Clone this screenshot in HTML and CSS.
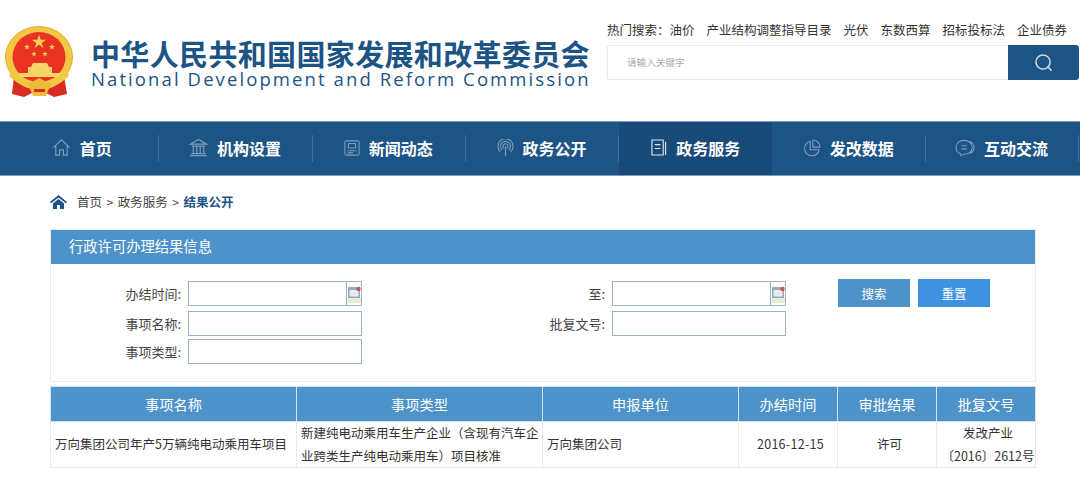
FILE: index.html
```html
<!DOCTYPE html>
<html lang="zh-CN">
<head>
<meta charset="utf-8">
<title>行政许可办理结果信息</title>
<link rel="stylesheet" href="styles.css">
</head>
<body>
<header class="top">
  <div class="brand">
    <svg class="emblem" viewBox="0 0 70 72" width="70" height="72" aria-hidden="true">
      <defs><polygon id="star" points="0,-1 .225,-.309 .951,-.309 .363,.118 .588,.809 0,.382 -.588,.809 -.363,.118 -.951,-.309 -.225,-.309" fill="#f4cf58"/></defs>
      <path d="M10 50 L8 68 L20 71 L30 66 L40 66 L50 71 L63 68 L60 50 Z" fill="#d92c20"/>
      <ellipse cx="35" cy="31" rx="33.5" ry="30.500" fill="#f3c644"/>
      <ellipse cx="35" cy="31" rx="33.5" ry="30.500" fill="none" stroke="#e7b034" stroke-width="1"/>
      <ellipse cx="35" cy="31" rx="26.500" ry="25" fill="#e93222"/>
      <use href="#star" transform="translate(35 16) scale(7.5)"/>
      <use href="#star" transform="translate(23 21) scale(3.2)"/>
      <use href="#star" transform="translate(48 21) scale(3.2)"/>
      <use href="#star" transform="translate(30 28) scale(3)"/>
      <use href="#star" transform="translate(41 28) scale(3)"/>
      <path d="M27 41 L29 37 L43 37 L45 41 Z M24 41 H48 V47 H24 Z M15 47 H56 V51 H15 Z" fill="#f6d468"/>
      <path d="M7 44 Q35 72 63 44 L65 50 Q35 78 5 50 Z" fill="#f3c644"/>
      <path d="M24 58 L35 52 L47 58 L42 70 L29 70 Z" fill="#efbb3a"/>
      <path d="M30 63 H41 V66 H30 Z" fill="#d92c20"/>
    </svg>
    <div class="brand-text">
      <div class="brand-cn">中华人民共和国国家发展和改革委员会</div>
      <div class="brand-en">National Development and Reform Commission</div>
    </div>
  </div>
  <div class="tools">
    <div class="hot">
      <span class="hot-label">热门搜索：</span>
      <a>油价</a><a>产业结构调整指导目录</a><a>光伏</a><a>东数西算</a><a>招标投标法</a><a>企业债券</a>
    </div>
    <div class="search">
      <div class="search-field">请输入关键字</div>
      <div class="search-btn">
        <svg viewBox="0 0 20 20" width="19" height="19" fill="none" stroke="#cfdbe6" stroke-width="1.6"><circle cx="9.5" cy="9.5" r="7.4"/><path d="M14.8 14.8 L18 18" stroke-linecap="round"/></svg>
      </div>
    </div>
  </div>
</header>

<nav class="nav">
  <a class="nav-item">
    <svg class="nav-icon" viewBox="0 0 20 20" width="19" height="19"><path d="M1.5 10 L10 2 L18.5 10 M4 8.5 V18 H8 V12.5 H12 V18 H16 V8.5"/></svg>
    <span>首页</span>
  </a>
  <a class="nav-item">
    <svg class="nav-icon" viewBox="0 0 20 20" width="19" height="19"><path d="M1.5 6.5 L10 1.5 L18.5 6.5 Z M3 8.5 H17 M4.5 8.5 V16 M8.2 8.5 V16 M11.8 8.5 V16 M15.5 8.5 V16 M2.5 16.5 H17.5 M1 18.5 H19"/></svg>
    <span>机构设置</span>
  </a>
  <a class="nav-item">
    <svg class="nav-icon" viewBox="0 0 18 18" width="16" height="16"><rect x="1" y="1" width="16" height="16" rx="1.5"/><rect x="5" y="4" width="8" height="5"/><path d="M4 12 H14 M4 14.5 H10"/></svg>
    <span>新闻动态</span>
  </a>
  <a class="nav-item">
    <svg class="nav-icon" viewBox="0 0 18 18" width="17" height="17"><path d="M3.5 13.5 A8 8 0 1 1 14.5 13.5 M5.6 11.6 A5.2 5.2 0 1 1 12.4 11.6 M7.6 9.8 A2.6 2.6 0 1 1 10.4 9.8 M9 8 V18"/></svg>
    <span>政务公开</span>
  </a>
  <a class="nav-item is-active">
    <svg class="nav-icon" viewBox="0 0 17 18" width="16" height="17"><path d="M1 1 H13 V17 H1 Z M15.5 3 V17 M4 6 H10 M4 10 H10"/></svg>
    <span>政务服务</span>
  </a>
  <a class="nav-item">
    <svg class="nav-icon" viewBox="0 0 20 20" width="18" height="18"><path d="M8 2.5 A8.2 8.2 0 1 0 18 12 H8 Z M11 1.2 A8 8 0 0 1 18.8 9 H11 Z"/></svg>
    <span>发改数据</span>
  </a>
  <a class="nav-item">
    <svg class="nav-icon" viewBox="0 0 22 20" width="20" height="18"><path d="M10 1.5 C4.5 1.5 1 5 1 9.5 C1 13 3 15.5 6 16.5 L6.5 18.5 L9.5 17 C15.5 17 19 14 19 9.5 C19 5 15.5 1.5 10 1.5 Z M16 2.5 C19 4 21 6.500 21 9.5 C21 12.500 19.500 14.800 17 16 M7 7.500 H13 M7 11 H13"/></svg>
    <span>互动交流</span>
  </a>
</nav>

<main class="main">
  <div class="crumb">
    <svg class="crumb-icon" viewBox="0 0 17 14" width="17" height="14"><path d="M8.500 0 L17 7 L15.800 8.300 L8.500 2.400 L1.200 8.300 L0 7 Z" fill="#1c5485"/><path d="M3 8.600 L8.500 4 L14 8.600 V14 H10 V10 H7 V14 H3 Z" fill="#1c5485"/></svg>
    <span>首页</span><span class="crumb-sep">&gt;</span><span>政务服务</span><span class="crumb-sep">&gt;</span><strong class="crumb-now">结果公开</strong>
  </div>

  <section class="panel">
    <h2 class="panel-head">行政许可办理结果信息</h2>
    <form class="filter">
      <label class="filter-label">办结时间:</label>
      <div class="field field-date">
        <input class="field-input" type="text">
        <span class="cal">
          <svg viewBox="0 0 14 23" width="14" height="23"><rect y="16" width="14" height="5" fill="#e7ecd6"/><rect x="1" y="5" width="12" height="11" fill="#97a7bc"/><rect x="2.500" y="8" width="9" height="6.500" fill="#e6ebf2"/><circle cx="11.500" cy="7" r="2.200" fill="#d0514c"/></svg>
        </span>
      </div>
      <label class="filter-label">至:</label>
      <div class="field field-date">
        <input class="field-input" type="text">
        <span class="cal">
          <svg viewBox="0 0 14 23" width="14" height="23"><rect y="16" width="14" height="5" fill="#e7ecd6"/><rect x="1" y="5" width="12" height="11" fill="#97a7bc"/><rect x="2.500" y="8" width="9" height="6.500" fill="#e6ebf2"/><circle cx="11.500" cy="7" r="2.200" fill="#d0514c"/></svg>
        </span>
      </div>
      <button class="btn btn-search" type="button">搜索</button>
      <button class="btn btn-reset" type="button">重置</button>

      <label class="filter-label row-start">事项名称:</label>
      <div class="field"><input class="field-input" type="text"></div>
      <label class="filter-label">批复文号:</label>
      <div class="field"><input class="field-input" type="text"></div>

      <label class="filter-label row-start">事项类型:</label>
      <div class="field"><input class="field-input" type="text"></div>
    </form>
  </section>

  <table class="results">
    <colgroup>
      <col class="c1"><col class="c2"><col class="c3"><col class="c4"><col class="c5"><col class="c6">
    </colgroup>
    <thead>
      <tr><th>事项名称</th><th>事项类型</th><th>申报单位</th><th>办结时间</th><th>审批结果</th><th>批复文号</th></tr>
    </thead>
    <tbody>
      <tr>
        <td>万向集团公司年产5万辆纯电动乘用车项目</td>
        <td>新建纯电动乘用车生产企业（含现有汽车企业跨类生产纯电动乘用车）项目核准</td>
        <td>万向集团公司</td>
        <td class="center date">2016-12-15</td>
        <td class="center">许可</td>
        <td class="center tight">发改产业<br>〔2016〕2612号</td>
      </tr>
    </tbody>
  </table>
</main>
</body>
</html>
```

FILE: styles.css
```css
* { box-sizing: border-box; }

html, body { margin: 0; padding: 0; }

body {
  background: #fff;
  color: #333;
  font-family: "Noto Sans CJK SC", "Noto Sans", sans-serif;
  font-size: 13px;
  overflow: hidden;
}

/* header */
.top {
  display: flex;
  justify-content: space-between;
  height: 121px;
}

.brand {
  display: flex;
  padding: 26px 0 0 4px;
}

.emblem { flex: none; }

.brand-text {
  margin: 10px 0 0 17px;
  color: #1c5485;
}

.brand-cn {
  font-size: 29px;
  line-height: 35px;
  font-weight: 700;
  letter-spacing: 0.35px;
  white-space: nowrap;
}

.brand-en {
  font-family: "Open Sans", sans-serif;
  font-size: 18.5px;
  line-height: 20px;
  margin-top: -2px;
  letter-spacing: 2.1px;
  white-space: nowrap;
}

.tools {
  flex: none;
  width: 473px;
  padding-top: 21px;
}

.hot {
  display: flex;
  height: 18px;
  line-height: 18px;
  font-size: 12.5px;
  color: #333;
  white-space: nowrap;
}

.hot a { margin-right: 12px; }

.search {
  display: flex;
  height: 35px;
  margin-top: 6px;
  width: 472px;
}

.search-field {
  flex: 1;
  padding-left: 19px;
  line-height: 33px;
  font-size: 9.6px;
  color: #aaa;
  border: 1px solid #e8e8e8;
  border-right: 0;
  border-radius: 3px 0 0 3px;
}

.search-btn {
  display: flex;
  align-items: center;
  justify-content: center;
  width: 71px;
  background: #1c5485;
  border-radius: 0 3px 3px 0;
}

/* nav */
.nav {
  display: flex;
  height: 55px;
  padding: 0 0 0 6px;
  background: #1c5485;
  border-top: 1px solid #7a9cba;
  border-bottom: 1px solid #7a9cba;
}

.nav-item {
  position: relative;
  display: flex;
  align-items: center;
  justify-content: center;
  gap: 9px;
  width: 153.3px;
  padding: 0 2px 2px 0;
  color: #fff;
  font-size: 16px;
  font-weight: 700;
}

.nav-item::after {
  content: "";
  position: absolute;
  right: 0;
  top: 13px;
  height: 27px;
  width: 1px;
  background: #3c6f9c;
}

.nav-item.is-active {
  padding-right: 0;
  background: #174a78;
}

.nav-item.is-active::after { display: none; }

.nav-icon {
  flex: none;
  fill: none;
  stroke: #7d9cb8;
  stroke-width: 1.2;
}

.is-active .nav-icon { stroke: #dfe7ee; }

/* main */
.main { padding: 0 44px 0 50px; }

.crumb {
  display: flex;
  align-items: center;
  height: 53px;
  padding-bottom: 2px;
  font-size: 12.5px;
  color: #444;
}

.crumb-icon { margin-right: 10px; }
.crumb-sep { margin: 0 4.5px; font-size: 12px; }
.crumb-now { color: #1c5485; font-weight: 700; }

.panel {
  border: 1px solid #e8ecef;
  height: 153px;
}

.panel-head {
  margin: 0;
  height: 34px;
  padding-left: 18px;
  line-height: 32px;
  font-size: 14.3px;
  font-weight: 400;
  color: #fff;
  background: #4d93c9;
}

.filter {
  display: grid;
  grid-template-columns: 137px 174px 250px 174px 52px 72px 72px;
  grid-template-rows: 30px 28px 25px;
  padding-top: 17px;
}

.filter-label {
  padding-right: 7px;
  text-align: right;
  line-height: 26px;
  color: #444;
  font-size: 13px;
  white-space: nowrap;
}

.row-start { grid-column: 1; }

.field {
  display: flex;
  height: 25px;
  border: 1px solid #9cb2cd;
  background: #fff;
}

.field-input {
  flex: 1;
  min-width: 0;
  border: 0;
  padding: 0 4px;
  background: transparent;
  outline: none;
}

.cal {
  flex: none;
  width: 15px;
  border-left: 1px solid #9cb2cd;
}

.cal svg { display: block; }

.btn {
  align-self: start;
  height: 28px;
  width: 72px;
  margin-top: -2px;
  border: 0;
  padding: 0;
  color: #fff;
  font: inherit;
  font-size: 12.5px;
}

.btn-search { grid-column: 6; background: #4d93c9; }
.btn-reset { grid-column: 7; margin-left: 8px; background: #3f92e0; }

/* table */
.results {
  width: 985px;
  margin-top: 4px;
  border-collapse: collapse;
  table-layout: fixed;
  font-size: 12.5px;
}

.c1, .c2 { width: 246px; }
.c3 { width: 196px; }
.c4, .c5, .c6 { width: 99px; }

.results th {
  height: 35px;
  padding: 0;
  background: #4d93c9;
  border: 1px solid #d5e3ef;
  color: #fff;
  font-weight: 400;
  font-size: 14.2px;
  text-align: center;
}

.results td {
  height: 46px;
  padding: 0 2px 0 4px;
  border: 1px solid #e6e8ea;
  line-height: 22.5px;
  color: #333;
}

.results td.center { padding: 0 0 0 5px; text-align: center; }
.results td.date { letter-spacing: 0.3px; }
.results td.tight { padding: 0 0 0 4px; white-space: nowrap; }
```
